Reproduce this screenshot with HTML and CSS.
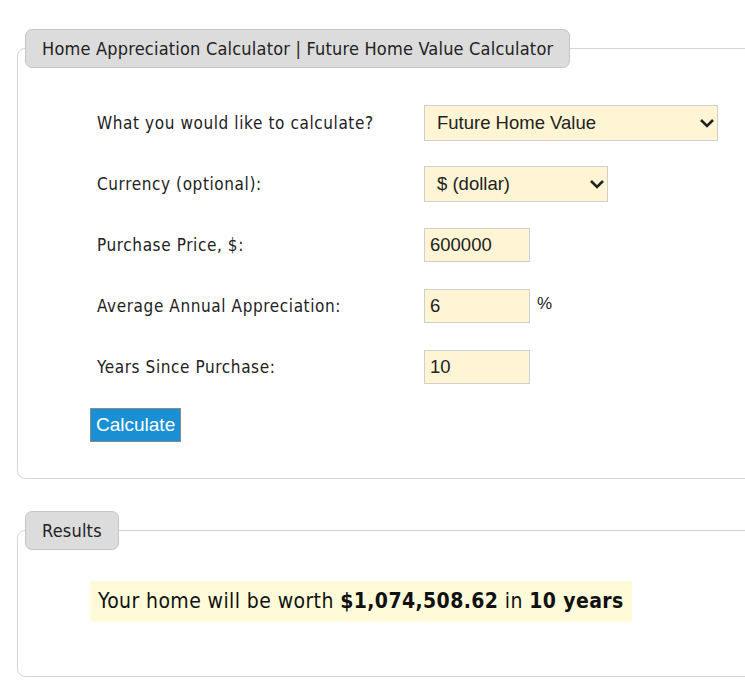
FILE: index.html
```html
<!DOCTYPE html>
<html lang="en">
<head>
    <meta charset="UTF-8">
    <meta name="viewport" content="width=device-width, initial-scale=1.0">
    <title>Home Appreciation Calculator</title>
    <link rel="stylesheet" href="styles.css">
</head>
<body>
    <div class="page">
        <fieldset class="box">
            <legend>Home Appreciation Calculator | Future Home Value Calculator</legend>
            <div class="form">
                <div class="row">
                    <label for="calcType">What you would like to calculate?</label>
                    <div class="select-wrap wide">
                        <select id="calcType">
                            <option>Future Home Value</option>
                            <option>Past Home Value</option>
                        </select>
                        <svg class="chevron" width="16" height="10" viewBox="0 0 16 10"><path d="M2 2l6 6 6-6" fill="none" stroke="#222" stroke-width="2.6"/></svg>
                    </div>
                </div>
                <div class="row">
                    <label for="currency">Currency (optional):</label>
                    <div class="select-wrap mid">
                        <select id="currency">
                            <option>$ (dollar)</option>
                            <option>&euro; (euro)</option>
                        </select>
                        <svg class="chevron" width="16" height="10" viewBox="0 0 16 10"><path d="M2 2l6 6 6-6" fill="none" stroke="#222" stroke-width="2.6"/></svg>
                    </div>
                </div>
                <div class="row">
                    <label for="price">Purchase Price, $:</label>
                    <input id="price" type="text" value="600000">
                </div>
                <div class="row">
                    <label for="rate">Average Annual Appreciation:</label>
                    <div class="with-unit">
                        <input id="rate" type="text" value="6">
                        <span>%</span>
                    </div>
                </div>
                <div class="row">
                    <label for="years">Years Since Purchase:</label>
                    <input id="years" type="text" value="10">
                </div>
                <button id="calculate">Calculate</button>
            </div>
        </fieldset>

        <fieldset class="box results">
            <legend>Results</legend>
            <div class="answer">
                <p>Your home will be worth <b id="value">$1,074,508.62</b> in <b id="period">10 years</b></p>
            </div>
        </fieldset>
    </div>
    <script>
        document.getElementById('calculate').addEventListener('click', () => {
            const price = Number(document.getElementById('price').value);
            const rate = Number(document.getElementById('rate').value);
            const years = Number(document.getElementById('years').value);
            const future = price * Math.pow(1 + rate / 100, years);
            document.getElementById('value').textContent = '$' + future.toLocaleString('en-US', { minimumFractionDigits: 2, maximumFractionDigits: 2 });
            document.getElementById('period').textContent = years + ' years';
        });
    </script>
</body>
</html>
```

FILE: styles.css
```css
* {
    box-sizing: border-box;
}
html, body {
    margin: 0;
    padding: 0;
    overflow: hidden;
}
body {
    background-color: #fff;
    font-family: "DejaVu Sans Condensed", "DejaVu Sans", sans-serif;
    color: #222;
}
.page {
    padding: 29px 0 0 17px;
    width: 900px;
}
.box {
    margin: 0;
    padding: 0 0 0 7px;
    border: 1px solid #d4d4d4;
    border-radius: 8px;
    width: 860px;
}
.box legend {
    background-color: #dcdcdc;
    border: 1px solid #c4c4c4;
    border-radius: 7px;
    padding: 0 16px;
    height: 39px;
    line-height: 37px;
    font-size: 18px;
    letter-spacing: 0.2px;
    color: #222;
}
.form {
    padding: 24px 0 36px 65px;
}
.row {
    display: grid;
    grid-template-columns: 334px auto;
    align-items: center;
    height: 61px;
    font-size: 17px;
    letter-spacing: 0.6px;
}
.row label {
    padding-left: 7px;
}
select, input {
    font-family: "Liberation Sans", Arial, sans-serif;
    font-size: 18.5px;
    letter-spacing: 0;
    color: #222;
    background-color: #fff5d4;
    border: 1px solid #cfcfcf;
    border-radius: 0;
}
.select-wrap {
    position: relative;
}
.select-wrap.wide {
    width: 294px;
}
.select-wrap.mid {
    width: 184px;
}
select {
    appearance: none;
    width: 100%;
    height: 36px;
    padding: 0 30px 0 12px;
}
.chevron {
    position: absolute;
    right: 3px;
    top: 13px;
    pointer-events: none;
}
input {
    width: 106px;
    height: 34px;
    padding: 0 5px;
}
.with-unit {
    display: flex;
    align-items: center;
    gap: 7px;
    font-family: "Liberation Sans", Arial, sans-serif;
    font-size: 17px;
    letter-spacing: 0;
}
.with-unit span {
    margin-bottom: 4px;
}
#calculate {
    margin-top: 11px;
    height: 34px;
    padding: 0 5px;
    background-color: #1a90d4;
    color: #fff;
    border: 1px solid #8a8a8a;
    border-radius: 0;
    font-family: "Liberation Sans", Arial, sans-serif;
    font-size: 19px;
    cursor: pointer;
}
.results {
    margin-top: 32px;
}
.answer {
    padding: 31px 0 54px 65px;
}
.answer p {
    margin: 0;
    display: inline-block;
    background-color: #fffbd9;
    padding: 0 8px;
    height: 41px;
    line-height: 41px;
    font-size: 21px;
    letter-spacing: 0.4px;
    color: #111;
}
```
